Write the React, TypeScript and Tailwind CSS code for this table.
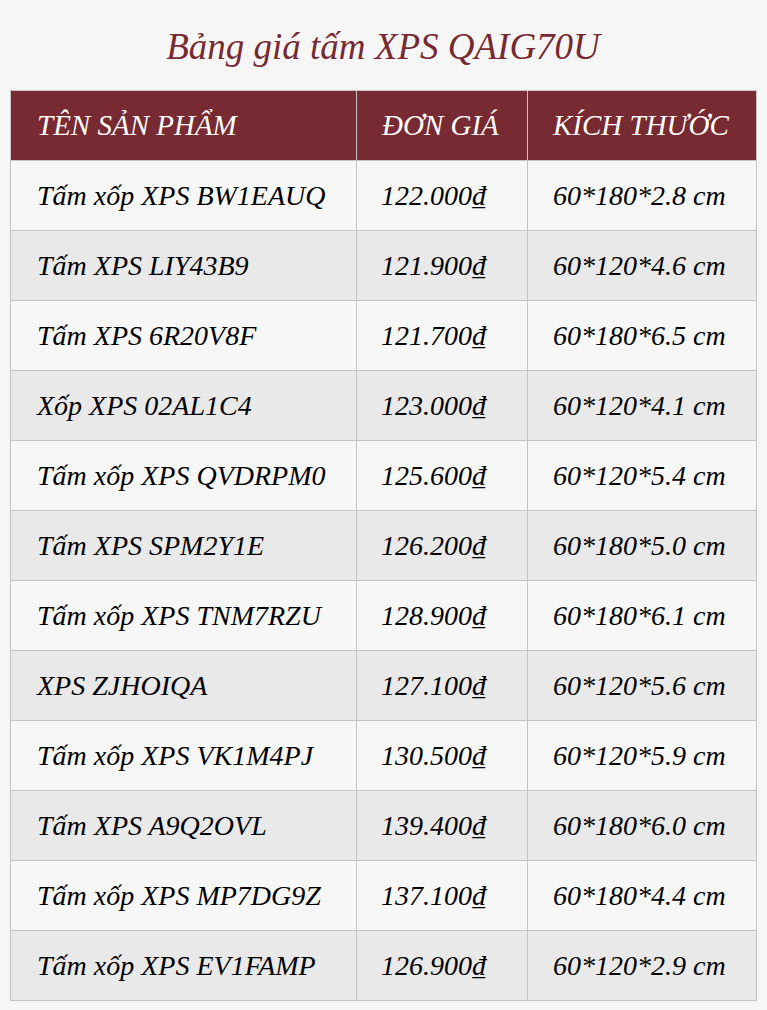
const rows: [string, string, string][] = [
  ['Tấm xốp XPS BW1EAUQ', '122.000₫', '60*180*2.8 cm'],
  ['Tấm XPS LIY43B9', '121.900₫', '60*120*4.6 cm'],
  ['Tấm XPS 6R20V8F', '121.700₫', '60*180*6.5 cm'],
  ['Xốp XPS 02AL1C4', '123.000₫', '60*120*4.1 cm'],
  ['Tấm xốp XPS QVDRPM0', '125.600₫', '60*120*5.4 cm'],
  ['Tấm XPS SPM2Y1E', '126.200₫', '60*180*5.0 cm'],
  ['Tấm xốp XPS TNM7RZU', '128.900₫', '60*180*6.1 cm'],
  ['XPS ZJHOIQA', '127.100₫', '60*120*5.6 cm'],
  ['Tấm xốp XPS VK1M4PJ', '130.500₫', '60*120*5.9 cm'],
  ['Tấm XPS A9Q2OVL', '139.400₫', '60*180*6.0 cm'],
  ['Tấm xốp XPS MP7DG9Z', '137.100₫', '60*180*4.4 cm'],
  ['Tấm xốp XPS EV1FAMP', '126.900₫', '60*120*2.9 cm'],
];

function App() {
  return (
    <div className="min-h-[1010px] bg-[#f6f6f6] pl-[10px] pr-[11px] pt-[22px] font-['Liberation_Serif',serif] italic">
      <h1 className="mb-[19px] text-center text-[37px] leading-[49px] text-[#772a31]">
        Bảng giá tấm XPS QAIG70U
      </h1>
      <table className="w-[746px] table-fixed border-collapse text-[28px] text-black">
        <colgroup>
          <col className="w-[346px]" />
          <col className="w-[171px]" />
          <col className="w-[229px]" />
        </colgroup>
        <thead>
          <tr className="h-[70px] bg-[#772a31] text-[29px] text-white">
            <th className="border border-[#c4c4c4] pl-[26px] text-left font-normal">TÊN SẢN PHẨM</th>
            <th className="border border-[#c4c4c4] pl-[25px] text-left font-normal">ĐƠN GIÁ</th>
            <th className="border border-[#c4c4c4] pl-[25px] text-left font-normal">KÍCH THƯỚC</th>
          </tr>
        </thead>
        <tbody>
          {rows.map((r, i) => (
            <tr key={i} className={`h-[70px] ${i % 2 === 0 ? 'bg-[#f7f7f7]' : 'bg-[#e9e9e9]'}`}>
              <td className="border border-[#c4c4c4] pl-[26px]">{r[0]}</td>
              <td className="border border-[#c4c4c4] pl-[24px]">{r[1]}</td>
              <td className="border border-[#c4c4c4] pl-[25px]">{r[2]}</td>
            </tr>
          ))}
        </tbody>
      </table>
    </div>
  );
}
export default App;
